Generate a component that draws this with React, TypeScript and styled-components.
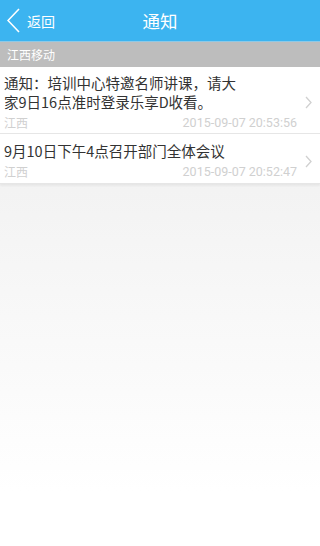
import styled, { createGlobalStyle } from 'styled-components'

const GlobalStyle = createGlobalStyle`
    html, body {
        margin: 0;
        padding: 0;
        height: 100%;
    }
    body {
        font-family: "Noto Sans CJK SC", "Roboto", sans-serif;
    }
    #root {
        height: 100%;
    }
`

type Notice = {
    title: string
    region: string
    time: string
}

const notices: Notice[] = [
    {
        title: '通知：培训中心特邀名师讲课，请大家9日16点准时登录乐享D收看。',
        region: '江西',
        time: '2015-09-07 20:53:56',
    },
    {
        title: '9月10日下午4点召开部门全体会议',
        region: '江西',
        time: '2015-09-07 20:52:47',
    },
]

const Page = styled.div`
    display: flex;
    flex-direction: column;
    width: 320px;
    height: 546px;
    overflow: hidden;
    background: linear-gradient(#efefef 0%, #f3f3f3 35%, #ffffff 90%);
`

const Header = styled.header`
    position: relative;
    display: flex;
    align-items: center;
    height: 41px;
    background-color: #3cb4f0;
    border-bottom: 1px solid #8fc9e6;
    color: #fff;
`

const BackButton = styled.div`
    display: flex;
    align-items: center;
    gap: 7px;
    padding-left: 7px;
    font-size: 14px;
    z-index: 1;
`

const Title = styled.h1`
    position: absolute;
    left: 0;
    right: 0;
    margin: 0;
    text-align: center;
    font-size: 17.5px;
    font-weight: 400;
`

const Section = styled.div`
    height: 25px;
    display: flex;
    align-items: center;
    padding-left: 7px;
    background-color: #bdbdbd;
    color: #fff;
    font-size: 12px;
`

const List = styled.ul`
    list-style: none;
    margin: 0;
    padding: 0;
    background-color: #fff;
    box-shadow: 0 2px 2px rgba(0, 0, 0, 0.05);
`

const Item = styled.li`
    box-sizing: border-box;
    min-height: 50px;
    display: flex;
    align-items: center;
    padding: 6px 8px 1px 4px;
    border-bottom: 1px solid #e6e6e6;
`

const ItemBody = styled.div`
    flex: 1;
    min-width: 0;
`

const ItemTitle = styled.p`
    margin: 0;
    max-width: 240px;
    font-size: 14.5px;
    line-height: 19px;
    color: #333;
`

const Meta = styled.div`
    display: flex;
    justify-content: space-between;
    margin-top: 3px;
    padding-right: 8px;
    font-size: 12px;
    line-height: 18px;
    color: #d0d0d0;
`

const Time = styled.span`
    font-family: "Roboto", sans-serif;
    font-size: 12.5px;
`

const Arrow = styled.span`
    display: flex;
    transform: scaleX(-1);
`

function Chevron({ color, w, h, stroke }: { color: string; w: number; h: number; stroke: number }) {
    return (
        <svg width={w} height={h} viewBox={`0 0 ${w} ${h}`}>
            <polyline
                points={`${w - 1},1 1,${h / 2} ${w - 1},${h - 1}`}
                fill="none"
                stroke={color}
                strokeWidth={stroke}
            />
        </svg>
    )
}

export default function App() {
    return (
        <Page>
            <GlobalStyle />
            <Header>
                <BackButton>
                    <Chevron color="#fff" w={13} h={25} stroke={1.6} />
                    <span>返回</span>
                </BackButton>
                <Title>通知</Title>
            </Header>
            <Section>江西移动</Section>
            <List>
                {notices.map((n) => (
                    <Item key={n.time}>
                        <ItemBody>
                            <ItemTitle>{n.title}</ItemTitle>
                            <Meta>
                                <span>{n.region}</span>
                                <Time>{n.time}</Time>
                            </Meta>
                        </ItemBody>
                        <Arrow>
                            <Chevron color="#d0d0d0" w={7} h={13} stroke={1.3} />
                        </Arrow>
                    </Item>
                ))}
            </List>
        </Page>
    )
}
